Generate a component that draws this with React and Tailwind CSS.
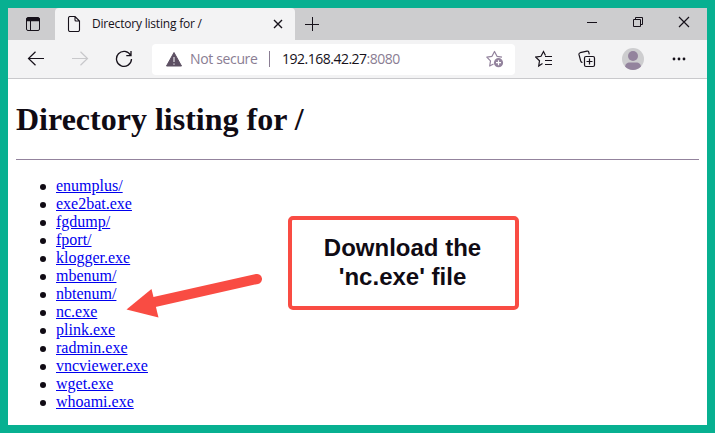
const files = [
  'enumplus/',
  'exe2bat.exe',
  'fgdump/',
  'fport/',
  'klogger.exe',
  'mbenum/',
  'nbtenum/',
  'nc.exe',
  'plink.exe',
  'radmin.exe',
  'vncviewer.exe',
  'wget.exe',
  'whoami.exe',
];

function TabBar() {
  return (
    <div className="flex h-8 bg-[#cdcdcf]">
      <div className="flex w-[47px] items-center justify-center">
        <svg width="16" height="16" viewBox="0 0 16 16" className="ml-0.5" fill="none" stroke="#16111a">
          <rect x="1.5" y="1.5" width="13" height="13" rx="1.5" />
          <path d="M1.5 3h13M1.5 4.3h13" strokeWidth="2" />
          <path d="M5.5 5v9.5" />
        </svg>
      </div>
      <div className="flex w-[240px] items-center rounded-t-sm bg-[#f3f3f4] pl-3">
        <svg width="14" height="16" viewBox="0 0 14 16" fill="none" stroke="#16111a" strokeWidth="1.1">
          <path d="M1.5 2C1.5 1 2 .5 3 .5h5L12.500 5v9c0 1-.5 1.500-1.500 1.500H3c-1 0-1.500-.5-1.500-1.500zM8 .5V4c0 .7.300 1 1 1h3.500" />
        </svg>
        <span className="ml-[11px] w-[112px] whitespace-nowrap font-['Open_Sans',sans-serif] text-[12px] leading-4 tracking-[-0.2px] text-[#16111a]">
          Directory listing for /
        </span>
        <svg width="10" height="10" viewBox="0 0 10 10" className="ml-[69px]" stroke="#16111a" strokeWidth="1.4">
          <path d="M1 1l8 8M9 1L1 9" />
        </svg>
      </div>
      <div className="flex flex-1 items-center">
        <svg width="14" height="14" viewBox="0 0 14 14" className="ml-[10px]" stroke="#16111a">
          <path d="M7.500 0v14M0 7.500h14" />
        </svg>
        <svg width="10" height="10" viewBox="0 0 10 10" className="ml-[268px]" stroke="#16111a">
          <path d="M0 3.500h10" />
        </svg>
        <svg width="12" height="12" viewBox="0 0 12 12" className="mb-1 ml-[35px]" fill="none" stroke="#16111a">
          <path d="M1.500 3.500h7v7h-7zM3.500 3.500v-2h7v7h-2" />
        </svg>
        <svg width="12" height="12" viewBox="0 0 12 12" className="mb-1 ml-[34px]" stroke="#16111a" strokeWidth="1.2">
          <path d="M1 1l10 10M11 1L1 11" />
        </svg>
      </div>
    </div>
  );
}

function Toolbar() {
  return (
    <div className="flex h-[39px] items-center border-b border-[#c9c9cc] bg-[#f3f3f4]">
      <svg width="18" height="16" viewBox="0 0 18 16" className="ml-[19px]" fill="none" stroke="#16111a" strokeWidth="1.2">
        <path d="M17 7.500H1.500M8.500 .7L1.500 7.500l7 6.800" />
      </svg>
      <svg width="18" height="16" viewBox="0 0 18 16" className="ml-[26px]" fill="none" stroke="#c8c8cb" strokeWidth="1.2">
        <path d="M1 7.500h15.500M9.500 .7l7 6.800-7 6.800" />
      </svg>
      <svg width="18" height="18" viewBox="0 0 18 18" className="ml-[26px]" fill="none" stroke="#16111a" strokeWidth="1.3">
        <path d="M15.700 5.500A7.500 7.500 0 1 0 16.500 9M16 1v4.700h-4.700" />
      </svg>
      <div className="ml-[19px] flex h-[31px] w-[363px] items-center rounded-sm bg-white font-['Open_Sans',sans-serif] text-[14px] leading-5">
        <svg width="16" height="15" viewBox="0 0 16 15" className="ml-[14px]">
          <path d="M8 0.500L15.500 14H.5z" fill="#5d5063" stroke="#5d5063" strokeLinejoin="round" />
          <path d="M8 5v5M8 11.500v1.200" stroke="#d9d6dc" strokeWidth="1.300" />
        </svg>
        <span className="ml-2 w-[67px] whitespace-nowrap tracking-[-0.35px] text-[#8a7d93]">Not secure</span>
        <span className="ml-[12px] h-4 w-px bg-[#8a7d93]" />
        <span className="ml-3 w-[120px] whitespace-nowrap tracking-[-0.5px] text-[#16111a]">
          192.168.42.27<span className="text-[#8a7d93]">:8080</span>
        </span>
        <svg width="18" height="18" viewBox="0 0 18 18" className="ml-[84px]" fill="none" stroke="#93839d" strokeWidth="1.200">
          <path d="M7.500 14L3.700 16l.8-5.200L.8 7.100 6 6.300 8.500 1.500 11 6.300l5 .8" strokeLinejoin="round" />
          <circle cx="12.500" cy="12.700" r="4.600" fill="#93839d" stroke="none" />
          <path d="M12.500 10.200v5M10 12.700h5" stroke="#fff" />
        </svg>
      </div>
      <svg width="18" height="18" viewBox="0 0 18 18" className="ml-5" fill="none" stroke="#16111a" strokeWidth="1.200">
        <path d="M7.500 13.500L3.700 16l.8-5.200L.8 7.100 6 6.300 8.500 1.500 10.500 5.500M10 6.500h7M10 10.500h7M10 14.500h7" />
      </svg>
      <svg width="18" height="18" viewBox="0 0 18 18" className="ml-[25px]" fill="none" stroke="#16111a" strokeWidth="1.200">
        <rect x="6.500" y="6.500" width="10" height="10" rx="1.500" />
        <path d="M11.500 8.500v6M8.500 11.500h6M4.500 12.500c-1 0-1.500-.5-1.800-1.500L1 4.700C.8 3.700 1.200 3 2.200 2.700L9 1.100c1-.2 1.600.2 1.800 1.200l.5 2" />
      </svg>
      <svg width="22" height="22" viewBox="0 0 22 22" className="ml-[26px]">
        <circle cx="11" cy="11" r="11" fill="#cdcdcf" />
        <circle cx="11" cy="8" r="5" fill="#93839d" />
        <path d="M3 18.500c.5-3 2.500-4 4-4h8c1.500 0 3.500 1 4 4a11 11 0 0 1-16 0z" fill="#93839d" />
      </svg>
      <svg width="14" height="4" viewBox="0 0 14 4" className="ml-7" fill="#16111a">
        <circle cx="2" cy="2" r="1.400" />
        <circle cx="7" cy="2" r="1.400" />
        <circle cx="12" cy="2" r="1.400" />
      </svg>
    </div>
  );
}

export default function App() {
  return (
    <div className="relative flex h-[433px] w-[715px] flex-col overflow-hidden border-8 border-[#07b091] bg-white">
      <TabBar />
      <Toolbar />
      <main className="px-2 font-['Liberation_Serif',serif] text-black">
        <h1 className="mt-[22px] text-[32px] font-bold leading-9 text-[#100b14]">Directory listing for /</h1>
        <hr className="mt-[22px] h-px border-0 bg-[#93839d]" />
        <ul className="mt-[17px] list-none pl-6 text-[16px] leading-[18px]">
          {files.map((name) => (
            <li key={name} className="flex items-center">
              <span className="mt-px mr-2.5 size-1.5 rounded-full bg-[#100b14]" />
              <a href="#" className="text-[#0000ee] underline">
                {name}
              </a>
            </li>
          ))}
        </ul>
      </main>
      <svg width="145" height="55" viewBox="120 268 145 55" className="absolute left-[112px] top-[260px]">
        <path d="M257 279L150 303" stroke="#f94c43" strokeWidth="10" strokeLinecap="round" />
        <path d="M126.500 309.500L151.500 289l7 28.500z" fill="#f94c43" />
      </svg>
      <div className="absolute left-[280px] top-[208px] flex h-[94px] w-[231px] items-center justify-center rounded-[5px] border-4 border-[#f94c43] bg-white pr-[2px] pb-0.5 text-center font-['Liberation_Sans',sans-serif] text-[24px] font-bold leading-[29px] text-[#100b14]">
        <p>
          Download the
          <br />
          'nc.exe' file
        </p>
      </div>
    </div>
  );
}
